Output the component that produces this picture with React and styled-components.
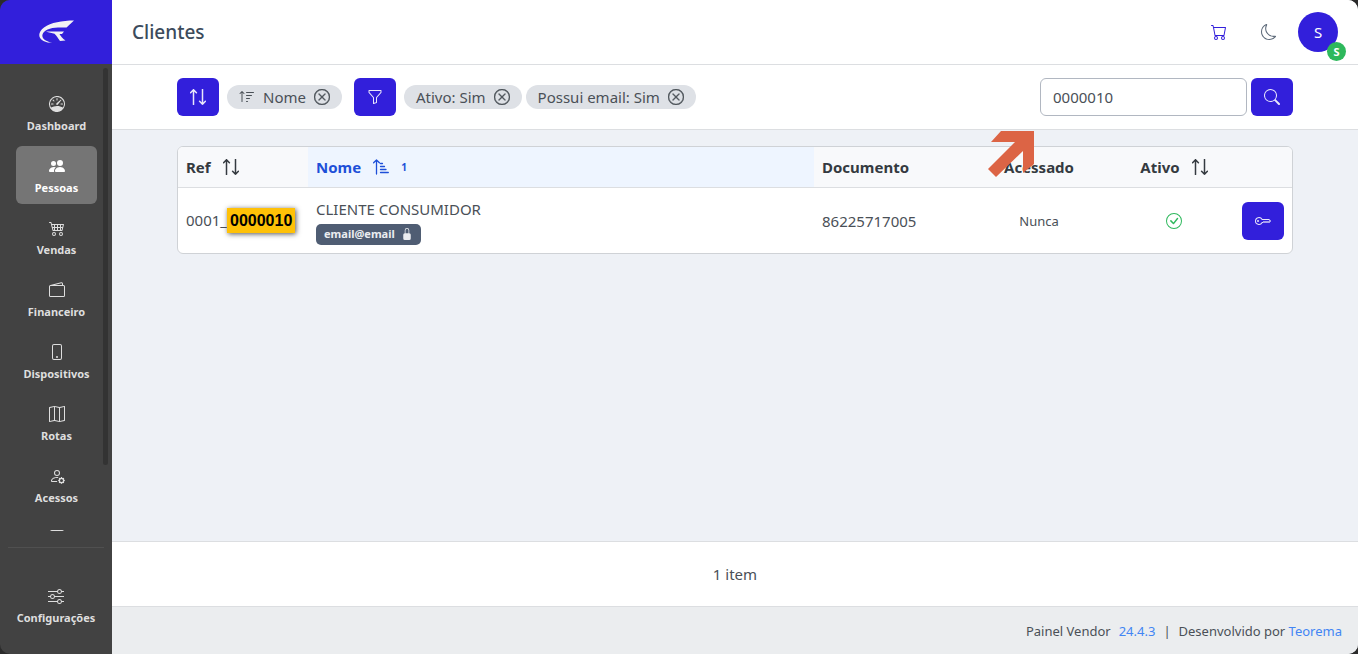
import styled, { createGlobalStyle } from 'styled-components';
import {
  BsSpeedometer,
  BsPeopleFill,
  BsCart4,
  BsWallet2,
  BsPhone,
  BsMap,
  BsPersonGear,
  BsSliders,
  BsSortUp,
  BsXCircle,
  BsFunnel,
  BsSearch,
  BsCart,
  BsMoon,
  BsCheckCircle,
  BsKey,
  BsLockFill,
  BsJournal,
} from 'react-icons/bs';

const menu = [
  { label: 'Dashboard', icon: BsSpeedometer },
  { label: 'Pessoas', icon: BsPeopleFill, active: true },
  { label: 'Vendas', icon: BsCart4 },
  { label: 'Financeiro', icon: BsWallet2 },
  { label: 'Dispositivos', icon: BsPhone },
  { label: 'Rotas', icon: BsMap },
  { label: 'Acessos', icon: BsPersonGear },
];

const clientes = [
  {
    prefix: '0001_',
    ref: '0000010',
    nome: 'CLIENTE CONSUMIDOR',
    email: 'email@email',
    documento: '86225717005',
    acessado: 'Nunca',
  },
];

const filters = ['Ativo: Sim', 'Possui email: Sim'];

// Unsorted column: one arrow up, one arrow down
function SortArrows() {
  return (
    <svg width="16" height="16" viewBox="0 0 16 16" fill="none" stroke="currentColor" strokeWidth="1.5" strokeLinecap="round" strokeLinejoin="round">
      <path d="M3.500 15.500V0.800M0.600 3.800L3.500 0.800L6.400 3.800" />
      <path d="M12.500 0.500V15.200M9.600 12.200L12.500 15.200L15.400 12.200" />
    </svg>
  );
}

function SortAscending() {
  return (
    <svg width="16" height="16" viewBox="0 0 16 16" fill="none" stroke="currentColor" strokeWidth="1.3" strokeLinecap="round" strokeLinejoin="round">
      <path d="M3.500 15V1M0.600 3.800L3.500 1L6.400 3.800" />
      <path d="M7.500 4.500H9.500M7.500 7.500H11.500M7.500 10.500H13M7.500 13.500H15.300" />
    </svg>
  );
}

export default function App() {
  return (
    <>
      <GlobalStyle />
      <Shell>
        <Sidebar>
          <Brand href="#" aria-label="Vendor">
            <svg width="36" height="24" viewBox="0 0 36 24" fill="#f2f2f5">
              <path d="M36 0.5C24 0.5 13 2.500 6 7.500C0 12 -0.500 18 5.500 21C8 22.300 11 22.800 14.500 23C7 21 3.500 18 4.500 14.500C5.500 10.500 12 7.500 20 7.500L28.500 7.500Z" />
              <path d="M8 11.500H26L24 14H21.500C22.500 16 24.500 18.500 27.500 20.500L22 21C20 18.500 18.500 15.500 16.500 13.800C14 12.800 11 12.500 8 11.500Z" />
            </svg>
          </Brand>
          <MenuScroll>
            {menu.map(({ label, icon: Icon, active }) => (
              <MenuItem key={label} href="#" $active={active}>
                <Icon size={16} />
                <MenuLabel>{label}</MenuLabel>
              </MenuItem>
            ))}
            <MenuItem href="#" aria-label="Mais">
              <BsJournal size={16} />
              <MenuLabel />
            </MenuItem>
            <Thumb />
          </MenuScroll>
          <MenuFooter>
            <MenuItem href="#">
              <BsSliders size={16} />
              <MenuLabel>Configurações</MenuLabel>
            </MenuItem>
          </MenuFooter>
        </Sidebar>

        <Main>
          <Header>
            <Title>Clientes</Title>
            <HeaderActions>
              <IconButton aria-label="Carrinho" $color="#321fdb"><BsCart size={16} /></IconButton>
              <IconButton aria-label="Tema" $color="#5b6878"><BsMoon size={16} /></IconButton>
              <Avatar aria-label="Conta">
                S
                <Badge>S</Badge>
              </Avatar>
            </HeaderActions>
          </Header>

          <Toolbar>
            <Container>
              <Tools>
                <PrimaryButton aria-label="Ordenar"><SortArrows /></PrimaryButton>
                <Chips>
                  <Chip>
                    <BsSortUp size={16} />
                    <span>Nome</span>
                    <ChipClose aria-label="Remover Nome"><BsXCircle size={16} /></ChipClose>
                  </Chip>
                </Chips>
                <PrimaryButton aria-label="Filtrar"><BsFunnel size={16} /></PrimaryButton>
                <Chips>
                  {filters.map((f) => (
                    <Chip key={f}>
                      {f}
                      <ChipClose aria-label={'Remover ' + f}><BsXCircle size={16} /></ChipClose>
                    </Chip>
                  ))}
                </Chips>
                <Search>
                  <SearchInput aria-label="Buscar" defaultValue="0000010" />
                  <PrimaryButton aria-label="Pesquisar"><BsSearch size={16} /></PrimaryButton>
                  <Pointer width="48" height="48" viewBox="0 0 48 48">
                    <path d="M13 1H46V34L35 43V21L8 47L0 39L27 12H3Z" fill="#dc6445" />
                  </Pointer>
                </Search>
              </Tools>
            </Container>
          </Toolbar>

          <Content>
            <Container>
              <TableCard>
                <Table>
                  <colgroup>
                    <col width="130" />
                    <col />
                    <col width="150" />
                    <col width="150" />
                    <col width="120" />
                    <col width="58" />
                  </colgroup>
                  <thead>
                    <tr>
                      <Th><ThInner>Ref <SortArrows /></ThInner></Th>
                      <Th $sorted>
                        <ThInner>Nome <SortAscending /> <Order>1</Order></ThInner>
                      </Th>
                      <Th>Documento</Th>
                      <Th $center>Acessado</Th>
                      <Th><ThInner $center>Ativo <SortArrows /></ThInner></Th>
                      <Th aria-label="Ações" />
                    </tr>
                  </thead>
                  <tbody>
                    {clientes.map((c) => (
                      <tr key={c.ref}>
                        <Td>{c.prefix}<Mark>{c.ref}</Mark></Td>
                        <Td>
                          <Name>{c.nome}</Name>
                          <Email>{c.email} <BsLockFill size={12} /></Email>
                        </Td>
                        <Td>{c.documento}</Td>
                        <Td $center $small>{c.acessado}</Td>
                        <Td><Check size={16} /></Td>
                        <Td><PrimaryButton aria-label="Acesso"><BsKey size={16} /></PrimaryButton></Td>
                      </tr>
                    ))}
                  </tbody>
                </Table>
              </TableCard>
            </Container>
          </Content>

          <Summary>1 item</Summary>
          <Footer>
            <span>Painel Vendor</span>
            <FooterLink href="#">24.4.3</FooterLink>
            <span>|</span>
            <span>Desenvolvido por <FooterLink href="#">Teorema</FooterLink></span>
          </Footer>
        </Main>
      </Shell>
    </>
  );
}

const GlobalStyle = createGlobalStyle`
  * {
    box-sizing: border-box;
  }
  body {
    margin: 0;
    background: #2b2b2b;
    color: #4a5057;
    font-family: 'Noto Sans', 'Open Sans', sans-serif;
    font-size: 15px;
    line-height: 24px;
  }
  button, input {
    font: inherit;
  }
  button {
    padding: 0;
    border: 0;
    cursor: pointer;
  }
  a {
    text-decoration: none;
  }
  svg {
    flex: none;
  }
`
const Shell = styled.div`
  display: flex;
  height: 100vh;
  border-radius: 10px;
  overflow: hidden;
`
const Sidebar = styled.nav`
  display: flex;
  flex-direction: column;
  flex: none;
  width: 112px;
  background: #424242;
`
const Brand = styled.a`
  display: flex;
  align-items: center;
  justify-content: center;
  flex: none;
  height: 64px;
  background: #321fdb;
`
const MenuScroll = styled.div`
  position: relative;
  display: flex;
  flex-direction: column;
  gap: 4px;
  flex: 1;
  min-height: 0;
  overflow: hidden;
  padding: 20px 15px 0 16px;
`
const MenuItem = styled.a`
  display: flex;
  flex-direction: column;
  align-items: center;
  gap: 5px;
  flex: none;
  height: 58px;
  padding-top: 12px;
  border-radius: 6px;
  color: ${(props) => props.$active ? '#fff' : '#dedede'};
  background: ${(props) => props.$active ? '#757575' : 'transparent'};
`
const MenuLabel = styled.span`
  height: 18px;
  font-size: 11px;
  font-weight: 700;
  line-height: 18px;
`
const Thumb = styled.div`
  position: absolute;
  top: 4px;
  right: 4px;
  width: 5px;
  height: 85%;
  border-radius: 3px;
  background: #333;
`
const MenuFooter = styled.div`
  flex: none;
  margin: 16px 8px 0;
  padding: 28px 0 20px;
  border-top: 1px solid #505050;
`
const Main = styled.main`
  display: flex;
  flex-direction: column;
  flex: 1;
  min-width: 0;
  background: #eef1f6;
`
const Header = styled.header`
  display: flex;
  align-items: center;
  justify-content: space-between;
  height: 65px;
  padding: 0 20px;
  border-bottom: 1px solid #dcdee1;
  background: #fff;
`
const Title = styled.h1`
  margin: 0;
  font-size: 19px;
  font-weight: 500;
  color: #3c4b5c;
`
const HeaderActions = styled.div`
  display: flex;
  align-items: center;
  gap: 8px;
`
const IconButton = styled.button`
  display: flex;
  align-items: center;
  justify-content: center;
  width: 42px;
  height: 40px;
  background: none;
  color: ${(props) => props.$color};
`
const Avatar = styled.button`
  position: relative;
  width: 40px;
  height: 40px;
  border-radius: 50%;
  background: #321fdb;
  color: #fff;
`
const Badge = styled.span`
  position: absolute;
  right: -8px;
  bottom: -9px;
  width: 19px;
  height: 19px;
  border-radius: 50%;
  background: #2eb85c;
  font-size: 11px;
  font-weight: 700;
  line-height: 19px;
`
const Toolbar = styled.section`
  padding: 13px 0;
  border-bottom: 1px solid #dcdee1;
  background: #fff;
`
const Container = styled.div`
  width: 100%;
  max-width: 1140px;
  margin: 0 auto;
  padding: 0 12px;
`
const Tools = styled.div`
  display: flex;
  align-items: center;
  gap: 8px;
`
const PrimaryButton = styled.button`
  display: flex;
  align-items: center;
  justify-content: center;
  flex: none;
  width: 42px;
  height: 38px;
  border-radius: 6px;
  background: #321fdb;
  color: #e8e6fb;
`
const Chips = styled.div`
  display: flex;
  gap: 4px;
  margin-right: 4px;
`
const Chip = styled.span`
  display: flex;
  align-items: center;
  gap: 8px;
  height: 24px;
  padding: 0 12px;
  border-radius: 12px;
  background: #dee1e6;
`
const ChipClose = styled.button`
  display: flex;
  background: none;
  color: inherit;

  svg {
    stroke-width: 0.4;
  }
`
const Search = styled.div`
  position: relative;
  display: flex;
  gap: 4px;
  margin-left: auto;
`
const SearchInput = styled.input`
  width: 207px;
  height: 38px;
  padding: 0 12px;
  border: 1px solid #b1b7c1;
  border-radius: 6px;
  background: #fff;
  color: #4a5057;
  outline: none;
`
const Pointer = styled.svg`
  position: absolute;
  left: -52px;
  top: 52px;
`
const Content = styled.section`
  flex: 1;
  padding: 16px 0;
`
const TableCard = styled.div`
  border: 1px solid #cfd2d6;
  border-radius: 6px;
  overflow: hidden;
  background: #fff;
`
const Table = styled.table`
  width: 100%;
  table-layout: fixed;
  border-collapse: separate;
  border-spacing: 0;
`
const Th = styled.th`
  height: 41px;
  padding: 0 8px;
  border-bottom: 1px solid #dcdee1;
  text-align: ${(props) => props.$center ? 'center' : 'left'};
  font-weight: 700;
  color: ${(props) => props.$sorted ? '#1d4fd8' : '#343a40'};
  background: ${(props) => props.$sorted ? '#eef5ff' : '#f8f9fb'};
`
const ThInner = styled.span`
  display: flex;
  align-items: center;
  justify-content: ${(props) => props.$center ? 'center' : 'flex-start'};
  gap: 12px;
`
const Order = styled.span`
  font-size: 10px;
`
const Td = styled.td`
  height: 65px;
  padding: 0 8px;
  text-align: ${(props) => props.$center ? 'center' : 'left'};
  font-size: ${(props) => props.$small ? '13px' : '15px'};
`
const Mark = styled.mark`
  padding: 4px 3px;
  background: #ffc107;
  box-shadow: 1px 1px 5px #555;
  color: #000;
  font-family: 'Liberation Sans', sans-serif;
  font-size: 16px;
  font-weight: 700;
`
const Name = styled.div`
  line-height: 24px;
`
const Email = styled.div`
  display: flex;
  align-items: center;
  gap: 6px;
  width: fit-content;
  height: 21px;
  margin-top: 3px;
  padding: 0 8px;
  border-radius: 5px;
  background: #4f5d73;
  color: #ebedf0;
  font-size: 11px;
  font-weight: 700;
`
const Check = styled(BsCheckCircle)`
  display: block;
  margin: 0 auto;
  color: #2eb85c;
`
const Summary = styled.div`
  padding: 20px;
  border-top: 1px solid #dcdee1;
  background: #fff;
  text-align: center;
`
const Footer = styled.footer`
  display: flex;
  align-items: center;
  justify-content: flex-end;
  gap: 8px;
  height: 48px;
  padding: 0 16px;
  border-top: 1px solid #dcdee1;
  background: #ebedef;
  font-size: 13px;
`
const FooterLink = styled.a`
  color: #4285f4;
`
